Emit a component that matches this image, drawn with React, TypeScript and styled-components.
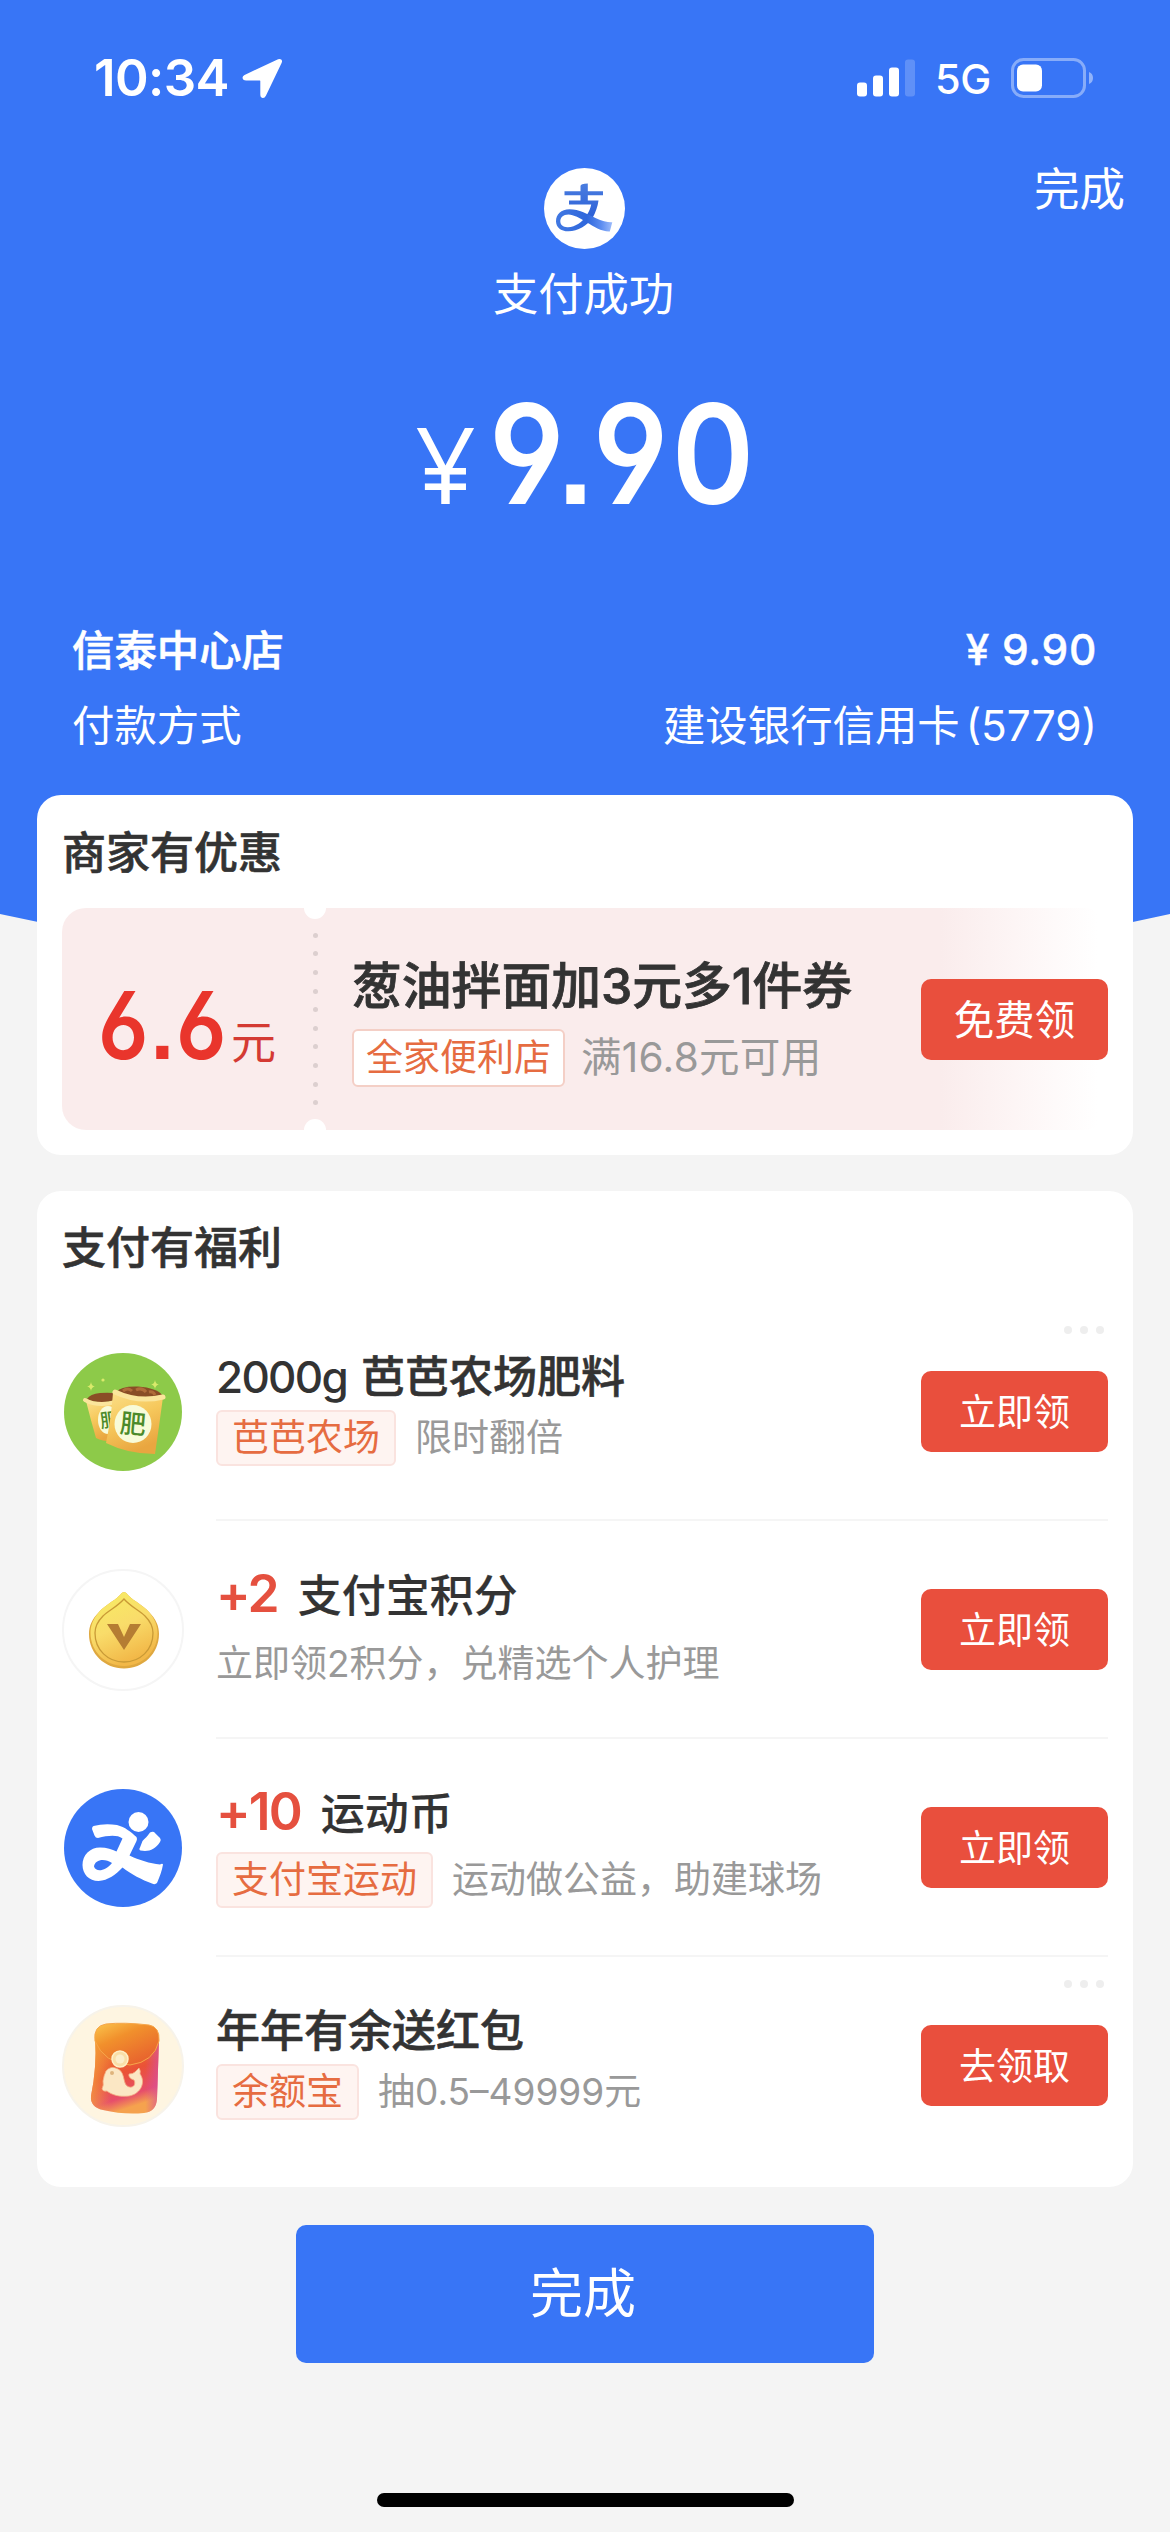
import React from 'react';
import styled, { createGlobalStyle } from 'styled-components';

const GlobalStyle = createGlobalStyle`
  * { box-sizing: border-box; }
  body {
    margin: 0;
    background: #f4f4f4;
    font-family: Inter, "Noto Sans CJK SC", sans-serif;
    color: #333;
    white-space: nowrap;
  }
  button { font-family: inherit; border: 0; padding: 0; white-space: nowrap; }
`;

const Screen = styled.main`
  position: relative;
  width: 1170px;
  height: 2532px;
  overflow: hidden;
  display: flex;
  flex-direction: column;
  align-items: center;
`;

const Backdrop = styled.div`
  position: absolute;
  inset: 0;
  z-index: -1;
  background: #3875f6;
  clip-path: path('M0 0H1170V914Q585 1044 0 914Z');
`;

const StatusBar = styled.div`
  width: 100%;
  height: 156px;
  padding: 0 77px 0 94px;
  display: flex;
  justify-content: space-between;
  color: #fff;
`;

const StatusGroup = styled.div`
  height: 156px;
  display: flex;
  align-items: center;
`;

const Clock = styled.span`
  font-size: 51px;
  line-height: 60px;
  font-weight: 600;
  letter-spacing: -0.6px;
  margin-right: 13px;
`;

const Network = styled.span`
  font-size: 41.5px;
  line-height: 48px;
  font-weight: 500;
  letter-spacing: -0.3px;
  margin: 2px 20px 0 20px;
`;

const TopRow = styled.header`
  width: 100%;
  padding: 12px 45px 0;
  display: grid;
  grid-template-columns: 1fr auto 1fr;
  color: #fff;
`;

const Brand = styled.div`
  grid-column: 2;
  display: flex;
  flex-direction: column;
  align-items: center;
`;

const BrandName = styled.div`
  margin-top: 16px;
  margin-left: -3px;
  font-size: 45.3px;
  line-height: 60px;
  font-weight: 400;
`;

const DoneLink = styled.a`
  justify-self: end;
  margin-top: 1px;
  font-size: 45.5px;
  line-height: 42px;
  height: 42px;
`;

const Amount = styled.div`
  margin-top: 64px;
  height: 130px;
  display: flex;
  align-items: baseline;
  justify-content: center;
  color: #fff;
  line-height: 130px;
`;

const Yen = styled.span`
  margin-right: -17px;
  font-family: "Open Sans", sans-serif;
  font-size: 106px;
  font-weight: 400;
`;

const AmountValue = styled.span`
  margin-right: -3px;
  font-size: 139px;
  font-weight: 600;
  letter-spacing: 4px;
  font-feature-settings: "cv03", "cv04", "ss07";
  transform: scaleX(0.9);
  transform-origin: right;
`;

const Details = styled.dl`
  width: 100%;
  margin: 91px 0 0;
  padding: 0 73px 35px 72px;
  color: #fff;
`;

const DetailRow = styled.div<{ $strong?: boolean }>`
  height: 75px;
  display: flex;
  justify-content: space-between;
  align-items: center;
  font-size: 42.4px;
  font-weight: ${(p) => (p.$strong ? 500 : 400)};
  dt, dd { margin: 0; }
  dt { -webkit-text-stroke: ${(p) => (p.$strong ? 0.6 : 0)}px #fff; }
  dd {
    padding-top: ${(p) => (p.$strong ? 4 : 0)}px;
    letter-spacing: ${(p) => (p.$strong ? 0.7 : 0)}px;
    word-spacing: ${(p) => (p.$strong ? 0 : -6)}px;
    -webkit-text-stroke: ${(p) => (p.$strong ? 0.4 : 0)}px #fff;
  }
`;

const Card = styled.section`
  width: 1096px;
  padding: 0 25px;
  background: #fff;
  border-radius: 24px;
`;

const CardTitle = styled.h2`
  margin: 0;
  font-size: 44px;
  line-height: 60px;
  font-weight: 500;
  -webkit-text-stroke: 0.6px #333;
`;

const OfferCard = styled(Card)`
  height: 360px;
  padding-top: 28px;
`;

const BenefitCard = styled(Card)`
  height: 996px;
  margin-top: 36px;
  padding-top: 27px;
`;

const Coupon = styled.div`
  margin-top: 25px;
  height: 222px;
  display: flex;
  align-items: center;
  border-radius: 24px;
  overflow: hidden;
  background: linear-gradient(90deg, #faecec 0 84%, #fdf5f5 91%, #fff 99%);
`;

const CouponValue = styled.div`
  width: 241px;
  padding-left: 36px;
  display: flex;
  align-items: baseline;
  color: #e9352c;
  line-height: 90px;
  margin-top: 30px;
`;

const CouponNumber = styled.span`
  width: 133px;
  font-size: 94px;
  font-weight: 600;
  letter-spacing: 0.5px;
  font-feature-settings: "cv03", "cv04", "ss07";
  transform: scaleX(0.89);
  transform-origin: left;
`;

const CouponUnit = styled.span`
  font-size: 45px;
  color: #d43a33;
`;

const Perforation = styled.div`
  width: 24px;
  height: 222px;
  display: flex;
  flex-direction: column;
  align-items: center;
  justify-content: space-between;
`;

const Notch = styled.i<{ $end?: boolean }>`
  width: 22px;
  height: 11px;
  background: #fff;
  border-radius: ${(p) => (p.$end ? '11px 11px 0 0' : '0 0 11px 11px')};
`;

const Hole = styled.i`
  width: 5px;
  height: 5px;
  border-radius: 50%;
  background: #dccfcf;
`;

const CouponInfo = styled.div`
  flex: 1;
  margin-left: 25px;
`;

const CouponTitle = styled.div`
  padding-top: 4px;
  font-size: 49.8px;
  line-height: 60px;
  font-weight: 500;
  color: #333;
  -webkit-text-stroke: 0.8px #333;
`;

const Line = styled.div<{ $gap: number; $top: number }>`
  display: flex;
  align-items: center;
  gap: ${(p) => p.$gap}px;
  margin-top: ${(p) => p.$top}px;
`;

const Tag = styled.span<{ $plain?: boolean }>`
  height: ${(p) => (p.$plain ? 58 : 56)}px;
  padding: 0 ${(p) => (p.$plain ? 12 : 14)}px;
  display: flex;
  align-items: center;
  border: 2px solid ${(p) => (p.$plain ? '#f4cfc6' : '#fae3df')};
  border-radius: 6px;
  background: ${(p) => (p.$plain ? '#fff' : '#fef4f1')};
  color: #e66c41;
  font-size: 37px;
  line-height: 50px;
`;

const Note = styled.span<{ $large?: boolean }>`
  font-size: ${(p) => (p.$large ? 40.5 : 37)}px;
  letter-spacing: ${(p) => (p.$large ? 0.3 : 0)}px;
  line-height: 50px;
  color: #999;
`;

const ActionButton = styled.button<{ $size?: number }>`
  width: 187px;
  height: 81px;
  padding-top: 3px;
  border-radius: 10px;
  background: #e94f3d;
  color: #fff;
  font-size: ${(p) => p.$size ?? 37}px;
  line-height: 60px;
`;

const Benefits = styled.ul`
  list-style: none;
  margin: 25px 0 0;
  padding: 0;
`;

const Benefit = styled.li`
  display: flex;
  height: 218px;
`;

const IconCell = styled.div`
  width: 154px;
  display: flex;
  align-items: center;
`;

const BenefitBody = styled.div<{ $last: boolean }>`
  position: relative;
  flex: 1;
  display: flex;
  align-items: center;
  justify-content: space-between;
  border-bottom: 2px solid ${(p) => (p.$last ? 'transparent' : '#f5f5f5')};
`;

const BenefitText = styled.div<{ $raised: boolean }>`
  align-self: flex-start;
  padding-top: ${(p) => (p.$raised ? 42 : 44)}px;
`;

const BenefitTitle = styled.div<{ $heavy: boolean }>`
  display: flex;
  align-items: baseline;
  font-size: 44px;
  line-height: 60px;
  font-weight: 500;
  -webkit-text-stroke: ${(p) => (p.$heavy ? 0.6 : 0.2)}px #333;
`;

const Quantity = styled.span`
  margin-right: 14px;
  letter-spacing: -1.7px;
  -webkit-text-stroke: 0;
`;

const Bonus = styled.span`
  margin-right: 20px;
  font-size: 51.5px;
  font-weight: 600;
  letter-spacing: -1.9px;
  color: #e5503f;
  -webkit-text-stroke: 0;
`;

const More = styled.div`
  position: absolute;
  top: 23px;
  right: 4px;
  display: flex;
  gap: 8px;
`;

const MoreDot = styled.i`
  width: 8px;
  height: 8px;
  border-radius: 50%;
  background: #eee;
`;

const FinishButton = styled.button`
  width: 578px;
  height: 138px;
  margin-top: 38px;
  padding: 0 4px 8px 0;
  border-radius: 10px;
  background: #3875f6;
  color: #fff;
  font-size: 53px;
`;

const HomeIndicator = styled.div`
  width: 417px;
  height: 14px;
  margin-top: 130px;
  border-radius: 7px;
  background: #000;
`;

const LocationArrow = () => (
  <svg width="41" height="41" viewBox="0 0 41 41">
    <path
      d="M36.500 2.200 3 17.800C.8 19 1 21.600 4 21.600H17.800c1 0 1.500.5 1.500 1.500V36.500c0 3 2.500 3.200 3.700.8L38.800 4.200C39.500 2.500 38.200 1.400 36.500 2.200Z"
      fill="#fff"
      stroke="#fff"
      strokeWidth="2"
      strokeLinejoin="round"
    />
  </svg>
);

const Signal = () => (
  <svg width="58" height="38" viewBox="0 0 58 38">
    <g fill="#fff">
      <rect x="0" y="23.500" width="10" height="14" rx="3" />
      <rect x="16" y="16.500" width="10" height="21" rx="3" />
      <rect x="32" y="8.500" width="10" height="29" rx="3" />
      <rect x="48" y="0.500" width="10" height="37" rx="3" opacity=".2" />
    </g>
  </svg>
);

const Battery = () => (
  <svg width="82" height="40" viewBox="0 0 82 40">
    <rect x="1.500" y="1.500" width="72" height="37" rx="11" fill="none" stroke="#fff" strokeOpacity=".4" strokeWidth="3" />
    <rect x="6" y="6.500" width="25" height="27" rx="6" fill="#fff" />
    <path d="M78 14a6.500 6.500 0 0 1 0 12Z" fill="#fff" opacity=".45" />
  </svg>
);

const AlipayLogo = () => (
  <svg width="81" height="81" viewBox="0 0 81 81">
    <defs>
      <linearGradient id="ap-stem" x1="0" y1="0" x2="0" y2="1">
        <stop offset="0" stopColor="#4a7de0" />
        <stop offset="1" stopColor="#2b5fd6" />
      </linearGradient>
      <linearGradient id="ap-tail" x1="0" y1="0" x2="1" y2="0">
        <stop offset="0" stopColor="#4178e2" />
        <stop offset=".55" stopColor="#2f67dc" />
        <stop offset=".8" stopColor="#5b8cf0" />
        <stop offset="1" stopColor="#9dbcfb" />
      </linearGradient>
    </defs>
    <circle cx="40.500" cy="40.500" r="40.500" fill="#fff" />
    <path d="M36.500 18q0-2.500 7.300-2.500V23.300H59v4H43.800V32.600H54.500C53.700 38.500 51.700 44.500 48.500 50l-6-2.600c2.500-3.600 4-7 4.700-10.800H25v-4H36.500V27.300H20.500v-4H36.500Z" fill="url(#ap-stem)" />
    <path
      d="M48.500 50C43 57.500 34 63.300 24.500 63.300 16.500 63.300 12 59 12 53.200 12 46.500 17 41.300 25.500 41.300 35 41.300 44 46.500 52 50.200 58 53 64 54.600 68.300 54.300L65.800 63.500C57.500 63.800 50 58.500 42.500 54.300 36 50.200 29.500 46.500 24.500 46.500 19 46.500 16.300 49.500 16.300 53.300 16.300 57.200 19.500 59.500 24 59.200 31.500 58.700 38.500 54 42.500 47.400Z"
      fill="url(#ap-tail)"
    />
  </svg>
);

const FertilizerIcon = () => (
  <svg width="122" height="122" viewBox="0 0 122 122">
    <defs>
      <linearGradient id="bag" x1="0" y1="0" x2=".4" y2="1">
        <stop offset="0" stopColor="#fbe08a" />
        <stop offset=".5" stopColor="#f6c85c" />
        <stop offset="1" stopColor="#e9a640" />
      </linearGradient>
    </defs>
    <circle cx="61" cy="61" r="59" fill="#8dca49" />
    <g fill="#d9ea6b">
      <path d="M29 31q.6 4 3.800 4.500-3.200.5-3.800 4.500-.6-4-3.800-4.500 3.200-.5 3.800-4.500ZM93 29q.6 4 3.800 4.500-3.200.5-3.800 4.500-.6-4-3.800-4.500 3.200-.5 3.800-4.500Z" />
      <circle cx="41" cy="29" r="1.600" />
    </g>
    <g>
      <path d="M24 50Q38 57 54 50V90Q42 91 34 87Q29 70 24 50Z" fill="url(#bag)" />
      <path d="M25 48Q28 43 38 42Q50 41 54 43V49Q36 54 25 48Z" fill="#8a4d26" />
      <path d="M23 49Q36 56 54 51" fill="none" stroke="#fbe59c" strokeWidth="4" strokeLinecap="round" />
      <ellipse cx="46" cy="69" rx="10" ry="14" fill="#f8fbd9" />
      <text x="38" y="76" fontSize="19" fontWeight="500" fill="#4c8a2a" transform="rotate(-8 45 69)">肥</text>
    </g>
    <path d="M51 42Q76 51 101 46Q97 76 93 103Q66 103 44 92Q49 68 51 42Z" fill="url(#bag)" />
    <path d="M55 41Q58 35 76 35.500Q95 37 100 44Q78 50 55 41Z" fill="#8a4d26" />
    <path d="M61 40q5-4 9 0m4-1q6-3 10 2m3 0q4-1 6 3" fill="none" stroke="#b06c3a" strokeWidth="3" />
    <path d="M53 41Q76 52 101 46" fill="none" stroke="#fbe59c" strokeWidth="5" strokeLinecap="round" />
    <ellipse cx="71" cy="73" rx="18.500" ry="19" fill="#f8fbd9" />
    <text x="58" y="82.500" fontSize="26" fontWeight="500" fill="#4c8a2a" transform="rotate(5 71 73)">肥</text>
  </svg>
);

const PointsIcon = () => (
  <svg width="122" height="122" viewBox="0 0 122 122">
    <defs>
      <linearGradient id="drop" x1="0" y1="0" x2=".4" y2="1">
        <stop offset="0" stopColor="#f7ee62" />
        <stop offset=".55" stopColor="#f9dc6a" />
        <stop offset="1" stopColor="#f2b848" />
      </linearGradient>
    </defs>
    <circle cx="61" cy="61" r="60" fill="#fff" stroke="#f5f5f5" strokeWidth="2" />
    <path d="M62 23Q64 23 66 26C73 33 81 36 87 43C94 50 97 57 97 65C97 85 81 99.500 62 99.500S27 85 27 65C27 57 30 50 37 43C43 36 51 33 58 26Q60 23 62 23Z" fill="#dfa83f" />
    <path d="M62 23Q64 23 66 26C73 33 81 36 87 43C93 50 95.500 57 95.500 64C95.500 83 80 97 62 97S28.500 83 28.500 64C28.500 57 31 50 37 43C43 36 51 33 58 26Q60 23 62 23Z" fill="url(#drop)" />
    <path d="M62 30C69 38 77 41 83 47C88 52 91 58 91 64C91 81 78 93 62 93S33 81 33 64C33 58 36 52 41 47C47 41 55 38 62 30Z" fill="none" stroke="#c99a36" strokeWidth="1.300" />
    <path d="M45 55H56L62 68 68 55H79L62 81Z" fill="#b57d33" />
  </svg>
);

const SportIcon = () => (
  <svg width="122" height="122" viewBox="0 0 122 122">
    <circle cx="61" cy="61" r="59" fill="#3875f6" />
    <g fill="#fff">
      <circle cx="76.500" cy="35" r="10" />
      <path d="M31.500 39Q42 36.300 55 38C63 40 69 45 74.500 50Q75.500 52 74.500 54L67.500 68.500C77 73 88 76.500 98 77.500Q100.500 76 101 77.500C100 84 97.500 90 95 96Q93 98 90 96.500C80 93 69 87 60.500 80.500C54 87.500 46 93.500 36.500 94C27 94 20.500 87 20.500 78C20.500 68 28 60.500 38 60.500C45 60.500 50 62.500 54.500 64.500L60.500 51.500C55 47.500 46 48.500 36 51Q33.500 51 32.500 48.500L30 42Q30 39.500 31.500 39ZM32 79.500C34 85.500 43 84.500 50 76C43 71 33 72 32 79.500Z" fillRule="evenodd" />
      <path d="M88 45.500Q90 44.500 92 45L98 51Q99.500 53 98 55C93 62.500 87 65 78.500 63.500Q76.500 62.500 78 60.500L80.500 54C83 51.500 85.500 49 88 45.500Z" />
    </g>
  </svg>
);

const EnvelopeIcon = () => (
  <svg width="122" height="122" viewBox="0 0 122 122">
    <defs>
      <linearGradient id="env" x1="0" y1="0" x2=".3" y2="1">
        <stop offset="0" stopColor="#f0992e" />
        <stop offset=".55" stopColor="#ea5236" />
        <stop offset=".85" stopColor="#e64e6b" />
        <stop offset="1" stopColor="#f5a24e" />
      </linearGradient>
      <linearGradient id="env-side" x1="0" y1="0" x2="1" y2="0">
        <stop offset="0" stopColor="#f6a53d" stopOpacity=".7" />
        <stop offset=".3" stopColor="#f6a53d" stopOpacity="0" />
        <stop offset=".8" stopColor="#d84f9c" stopOpacity="0" />
        <stop offset="1" stopColor="#d84f9c" stopOpacity=".75" />
      </linearGradient>
      <linearGradient id="flap" x1="0" y1="0" x2=".7" y2="1">
        <stop offset="0" stopColor="#fbc64d" />
        <stop offset=".4" stopColor="#f1902c" />
        <stop offset="1" stopColor="#e7602e" />
      </linearGradient>
    </defs>
    <circle cx="61" cy="61" r="60" fill="#fef5e1" stroke="#f7f3ea" strokeWidth="2" />
    <path d="M33 33Q60 50 97 33Q96 66 95 94Q94 107 82 108Q62 110 41 105Q28 102 29 91Q35 62 33 33Z" fill="url(#env)" />
    <path d="M33 33Q60 50 97 33Q96 66 95 94Q94 107 82 108Q62 110 41 105Q28 102 29 91Q35 62 33 33Z" fill="url(#env-side)" />
    <path d="M44 19Q62 17 87 20Q98 22 97 36Q92 57 68 60Q42 58 33 36Q31 21 44 19Z" fill="url(#flap)" stroke="#f6a64a" strokeWidth="1" />
    <circle cx="58" cy="54" r="8" fill="#f9dfa8" stroke="#fff0c8" strokeWidth="1.500" />
    <circle cx="58" cy="54" r="4.500" fill="#fceecb" />
    <path d="M44 66Q49 60 56 64C64 68 60 80 67 82C72 83 74 79 72 75Q66 73 67 69Q71 69 73 67L77 63Q79 66 78 69C84 77 79 89 67 91C57 92 50 90 45 86Q41 87 40 84Q42 80 41 76Q42 70 44 66Z" fill="#fbe7c4" stroke="#f4b184" strokeWidth=".8" />
    <circle cx="50" cy="68" r="2" fill="#dfb47c" />
  </svg>
);

interface BenefitData {
  icon: React.ReactNode;
  bonus?: string;
  quantity?: string;
  title: string;
  tag?: string;
  note: string;
  action: string;
  more?: boolean;
}

const benefits: BenefitData[] = [
  { icon: <FertilizerIcon />, quantity: '2000g', title: '芭芭农场肥料', tag: '芭芭农场', note: '限时翻倍', action: '立即领', more: true },
  { icon: <PointsIcon />, bonus: '+2', title: '支付宝积分', note: '立即领2积分，兑精选个人护理', action: '立即领' },
  { icon: <SportIcon />, bonus: '+10', title: '运动币', tag: '支付宝运动', note: '运动做公益，助建球场', action: '立即领' },
  { icon: <EnvelopeIcon />, title: '年年有余送红包', tag: '余额宝', note: '抽0.5–49999元', action: '去领取', more: true },
];

const lineOffset = (b: BenefitData) => {
  if (!b.tag) return 13;
  return b.bonus ? 8 : 3;
};

export default function App() {
  return (
    <Screen>
      <GlobalStyle />
      <Backdrop />
      <StatusBar>
        <StatusGroup>
          <Clock>10:34</Clock>
          <LocationArrow />
        </StatusGroup>
        <StatusGroup>
          <Signal />
          <Network>5G</Network>
          <Battery />
        </StatusGroup>
      </StatusBar>
      <TopRow>
        <Brand>
          <AlipayLogo />
          <BrandName>支付成功</BrandName>
        </Brand>
        <DoneLink>完成</DoneLink>
      </TopRow>
      <Amount>
        <Yen>¥</Yen>
        <AmountValue>9.90</AmountValue>
      </Amount>
      <Details>
        <DetailRow $strong>
          <dt>信泰中心店</dt>
          <dd>¥ 9.90</dd>
        </DetailRow>
        <DetailRow>
          <dt>付款方式</dt>
          <dd>建设银行信用卡 (5779)</dd>
        </DetailRow>
      </Details>
      <OfferCard>
        <CardTitle>商家有优惠</CardTitle>
        <Coupon>
          <CouponValue>
            <CouponNumber>6.6</CouponNumber>
            <CouponUnit>元</CouponUnit>
          </CouponValue>
          <Perforation>
            <Notch />
            {Array.from({ length: 10 }, (_, i) => (
              <Hole key={i} />
            ))}
            <Notch $end />
          </Perforation>
          <CouponInfo>
            <CouponTitle>葱油拌面加3元多1件券</CouponTitle>
            <Line $gap={16} $top={13}>
              <Tag $plain>全家便利店</Tag>
              <Note $large>满16.8元可用</Note>
            </Line>
          </CouponInfo>
          <ActionButton $size={40.5}>免费领</ActionButton>
        </Coupon>
      </OfferCard>
      <BenefitCard>
        <CardTitle>支付有福利</CardTitle>
        <Benefits>
          {benefits.map((b, i) => (
            <Benefit key={b.title}>
              <IconCell>{b.icon}</IconCell>
              <BenefitBody $last={i === benefits.length - 1}>
                {b.more && (
                  <More>
                    <MoreDot />
                    <MoreDot />
                    <MoreDot />
                  </More>
                )}
                <BenefitText $raised={!!b.bonus}>
                  <BenefitTitle $heavy={!b.bonus}>
                    {b.bonus && <Bonus>{b.bonus}</Bonus>}
                    {b.quantity && <Quantity>{b.quantity}</Quantity>}
                    {b.title}
                  </BenefitTitle>
                  <Line $gap={19} $top={lineOffset(b)}>
                    {b.tag && <Tag>{b.tag}</Tag>}
                    <Note>{b.note}</Note>
                  </Line>
                </BenefitText>
                <ActionButton>{b.action}</ActionButton>
              </BenefitBody>
            </Benefit>
          ))}
        </Benefits>
      </BenefitCard>
      <FinishButton>完成</FinishButton>
      <HomeIndicator />
    </Screen>
  );
}
